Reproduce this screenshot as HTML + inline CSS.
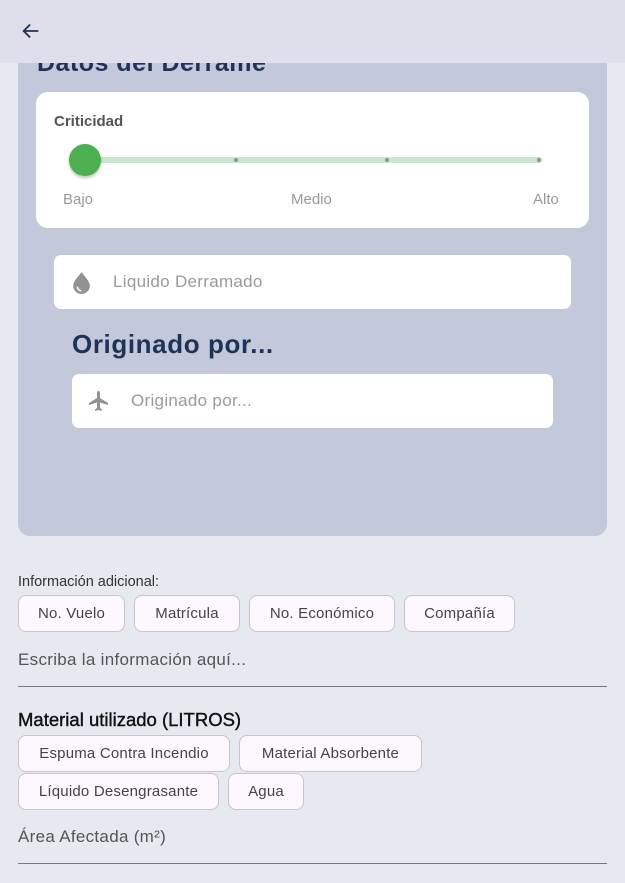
<!DOCTYPE html>
<html><head><meta charset="utf-8"><style>
*{margin:0;padding:0;box-sizing:border-box}
body{width:625px;height:883px;overflow:hidden;background:#e7e9f1;font-family:"Liberation Sans",sans-serif;position:relative}
.abs{position:absolute}
.hdr{left:0;top:0;width:625px;height:63px;background:#dfdfec;z-index:5}
.panel{left:18px;top:20px;width:589px;height:516px;background:#c3c8da;border-radius:12px;overflow:hidden}
.t{color:#1f3358;font-weight:bold}
.card{left:36px;top:92px;width:553px;height:136px;background:#fff;border-radius:12px}
.inp{background:#fff;border-radius:7px;height:54px}
.ph{font-size:17px;color:#9a9a9a;letter-spacing:.3px}
.chip{position:absolute;height:37px;border:1.5px solid #cbc3cb;background:#fdf8fd;border-radius:8px;font-size:15px;color:#444;display:flex;align-items:center;justify-content:center;letter-spacing:.2px}
.line{height:1px;background:#777;left:18px;width:589px}
.dot{width:4px;height:4px;border-radius:2px;background:#8a9a8a;top:158px}
</style></head><body>
<div class="abs hdr">
<svg class="abs" style="left:20px;top:20px" width="22" height="22" viewBox="0 0 24 24"><path d="M20 12H5M11 5l-7 7 7 7" fill="none" stroke="#1f3358" stroke-width="2"/></svg>
</div>
<div class="abs panel"></div>
<div class="abs t" style="left:37px;top:49px;font-size:25px;letter-spacing:.5px">Datos del Derrame</div>
<div class="abs card"></div>
<div class="abs" style="left:54px;top:113px;font-size:15px;font-weight:bold;color:#555">Criticidad</div>
<div class="abs" style="left:85px;top:157px;width:457px;height:6px;background:#c8e6c9;border-radius:3px"></div>
<div class="abs dot" style="left:234px"></div>
<div class="abs dot" style="left:385px"></div>
<div class="abs dot" style="left:537px"></div>
<div class="abs" style="left:69px;top:144px;width:32px;height:32px;border-radius:50%;background:#4caf50;box-shadow:0 2px 3px rgba(0,0,0,.25)"></div>
<div class="abs" style="left:63px;top:191px;font-size:15px;color:#999">Bajo</div>
<div class="abs" style="left:291px;top:191px;font-size:15px;color:#999">Medio</div>
<div class="abs" style="left:533px;top:191px;font-size:15px;color:#999">Alto</div>
<div class="abs inp" style="left:54px;top:255px;width:517px"></div>
<svg class="abs" style="left:71px;top:270px" width="21" height="25" viewBox="0 0 20 24"><path d="M10 2C7 6 2 11 2 15a8 8 0 0 0 16 0C18 11 13 6 10 2z" fill="#929292"/><path d="M6 16a4 4 0 0 0 4 4" stroke="#fff" stroke-width="1.5" fill="none"/></svg>
<div class="abs ph" style="left:113px;top:272px">Liquido Derramado</div>
<div class="abs t" style="left:72px;top:329px;font-size:26px;letter-spacing:.6px">Originado por...</div>
<div class="abs inp" style="left:72px;top:374px;width:481px"></div>
<svg class="abs" style="left:87px;top:389px" width="24" height="24" viewBox="0 0 24 24"><path d="M21 16v-2l-8-5V3.5C13 2.67 12.33 2 11.5 2S10 2.670 10 3.5V9l-8 5v2l8-2.5V19l-2 1.5V22l3.5-1 3.5 1v-1.5L13 19v-5.5l8 2.5z" fill="#929292"/></svg>
<div class="abs ph" style="left:131px;top:391px">Originado por...</div>
<div class="abs" style="left:18px;top:574px;font-size:14.5px;color:#333">Información adicional:</div>
<div class="chip" style="left:18px;top:595px;width:107px">No. Vuelo</div>
<div class="chip" style="left:134px;top:595px;width:106px">Matrícula</div>
<div class="chip" style="left:249px;top:595px;width:146px">No. Económico</div>
<div class="chip" style="left:404px;top:595px;width:111px">Compañía</div>
<div class="abs" style="left:18px;top:650px;font-size:17px;color:#555;letter-spacing:.3px">Escriba la información aquí...</div>
<div class="abs line" style="top:686px"></div>
<div class="abs" style="left:18px;top:709px;font-size:18.5px;color:#111;-webkit-text-stroke:.4px #111">Material utilizado (LITROS)</div>
<div class="chip" style="left:18px;top:735px;width:212px">Espuma Contra Incendio</div>
<div class="chip" style="left:239px;top:735px;width:183px">Material Absorbente</div>
<div class="chip" style="left:18px;top:773px;width:201px">Líquido Desengrasante</div>
<div class="chip" style="left:228px;top:773px;width:76px">Agua</div>
<div class="abs" style="left:18px;top:827px;font-size:17px;color:#555;letter-spacing:.3px">Área Afectada (m²)</div>
<div class="abs line" style="top:863px"></div>
</body></html>
